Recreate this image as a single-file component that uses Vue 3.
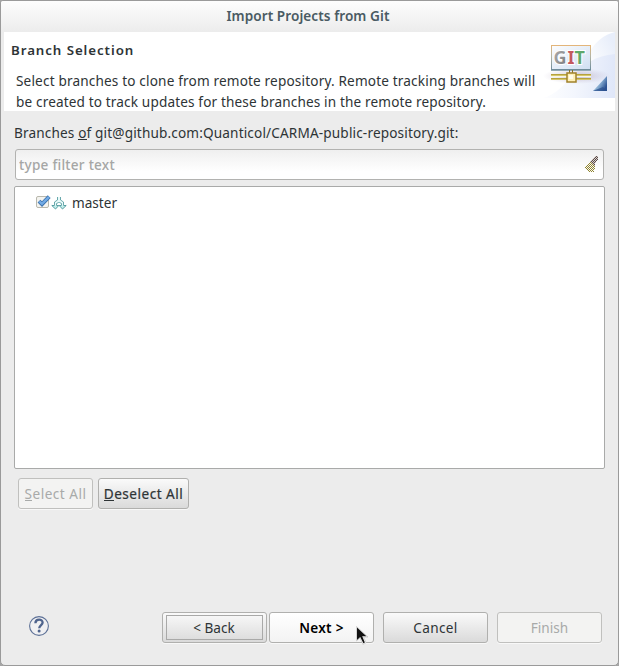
<script setup>
import { ref } from 'vue'

const filter = ref('')
const branches = ref([{ name: 'master', checked: true }])
</script>

<template>
  <main class="window">
    <header class="titlebar"><span class="t-title">Import Projects from Git</span></header>

    <section class="banner">
      <div class="banner-text">
        <h1>Branch Selection</h1>
        <p class="line-a">Select branches to clone from remote repository. Remote tracking branches will</p>
        <p class="line-b">be created to track updates for these branches in the remote repository.</p>
      </div>
      <svg class="banner-art" width="75" height="66" viewBox="0 0 75 66">
        <defs>
          <linearGradient id="sky" gradientUnits="userSpaceOnUse" x1="0" y1="40" x2="80" y2="46">
            <stop offset="0" stop-color="#fff" /><stop offset=".45" stop-color="#f3f6fd" /><stop offset="1" stop-color="#dde5f8" />
          </linearGradient>
          <linearGradient id="swoosh" gradientUnits="userSpaceOnUse" x1="46" y1="30" x2="75" y2="14">
            <stop offset="0" stop-color="#fff" /><stop offset="1" stop-color="#e8eefa" />
          </linearGradient>
          <linearGradient id="panel" x1="0" y1="0" x2="1" y2="1">
            <stop offset="0" stop-color="#fcfdff" /><stop offset="1" stop-color="#cfdff2" />
          </linearGradient>
          <linearGradient id="frame" x1="0" y1="0" x2="0" y2="1">
            <stop offset="0" stop-color="#e3b57a" /><stop offset="0.45" stop-color="#b3b5a5" /><stop offset="1" stop-color="#6f8d9c" />
          </linearGradient>
          <linearGradient id="corner" x1="0" y1="0" x2="1" y2="0.6">
            <stop offset="0.3" stop-color="#b5d5e8" /><stop offset="0.65" stop-color="#7da3cb" /><stop offset="1" stop-color="#2c5292" />
          </linearGradient>
          <linearGradient id="pale" x1="0" y1="0" x2="1" y2="1">
            <stop offset="0" stop-color="#b5b5b5" /><stop offset="1" stop-color="#777" />
          </linearGradient>
          <radialGradient id="shade">
            <stop offset="0" stop-color="#a99bb5" stop-opacity="0.6" /><stop offset="1" stop-color="#b9aec8" stop-opacity="0" />
          </radialGradient>
        </defs>
        <path d="M38 66Q42 8 75 0V66Z" fill="url(#swoosh)" />
        <path d="M3 66C30 59 35 25 75 22V66Z" fill="url(#sky)" />
        <ellipse cx="37" cy="44" rx="34" ry="8" fill="url(#shade)" />
        <rect x="11.5" y="13.5" width="39" height="24" fill="url(#panel)" stroke="url(#frame)" />
        <path d="M11 38.5H51" stroke="#94a9b4" />
        <g class="logo-text">
          <text x="13.5" y="32" fill="url(#pale)">G</text>
          <text x="27.5" y="32" fill="#c4585f">I</text>
          <text x="34.5" y="32" fill="#5fa86b">T</text>
        </g>
        <path d="M11 42.5H51M11 46.5H51" stroke="#b6a23e" />
        <path d="M11 43.5H51M11 47.5H51" stroke="#d5c66c" />
        <path d="M11 44.5H51" stroke="#fbf8df" />
        <path d="M29.5 38V41M32.5 38V41" stroke="#8a7428" />
        <rect x="27" y="41" width="9" height="9" fill="#fff0b8" stroke="#a1822a" stroke-width="1.5" />
        <rect x="29" y="43" width="4" height="4" fill="#fffbe8" />
        <path d="M53 59L67 44V59Z" fill="url(#corner)" />
        <path d="M54 58.5L63 55L67 59H53Z" fill="#2c528f" opacity=".75" />
      </svg>
    </section>

    <section class="content">
      <label class="caption" for="filter">Branches <u>o</u>f git@github.com:Quanticol/CARMA-public-repository.git:</label>
      <div class="search">
        <input id="filter" v-model="filter" placeholder="type filter text" />
        <svg width="16" height="18" viewBox="0 0 16 18" shape-rendering="crispEdges">
          <defs>
            <pattern id="dither" width="2" height="2" patternUnits="userSpaceOnUse">
              <rect width="2" height="2" fill="#fafaf4" />
              <rect width="1" height="1" fill="#8f8230" /><rect x="1" y="1" width="1" height="1" fill="#8f8230" />
            </pattern>
            <pattern id="handle" width="2" height="2" patternUnits="userSpaceOnUse">
              <rect width="2" height="2" fill="#d8d0cb" /><rect width="1" height="1" fill="#5b4c4a" /><rect x="1" y="1" width="1" height="1" fill="#5b4c4a" />
            </pattern>
          </defs>
          <path d="M7 7L12 11L11 17H6L1 13V12Z" fill="url(#dither)" />
          <path d="M7 7L12 1H15V4L12 9V11Z" fill="url(#handle)" />
        </svg>
      </div>

      <ul class="tree">
        <li v-for="b in branches" :key="b.name">
          <svg class="check" width="16" height="14" viewBox="0 0 16 14" @click="b.checked = !b.checked">
            <rect x=".5" y="1.5" width="12" height="11" rx="1.5" fill="#f3f3ef" stroke="#b9b8ad" />
            <path v-if="b.checked" d="M3 6.2L6 9.2L13.2 1.6" fill="none" stroke="#3a70ab" stroke-width="4" />
            <path v-if="b.checked" d="M3.3 6.3L6 8.9L13 1.8" fill="none" stroke="#70a9e4" stroke-width="2.4" />
          </svg>
          <svg class="branch" width="16" height="15" viewBox="0 0 16 15">
            <path d="M6.5 1V4L3.5 6V9.5H.8L4.5 13L7.8 9.5H5.5V7.5L7.5 6.5H8.5L10.5 7.5V9.5H8.2L11.5 13L15.2 9.5H12.5V6L9.5 4V1" fill="#e9faf9" stroke="none" />
            <path d="M6.5 1V4L3.5 6V9.5M9.5 1V4L12.5 6V9.5M5.5 9.5V7.5L7.5 6.5H8.5L10.5 7.5V9.5" fill="none" stroke="#5a9fa4" stroke-width=".9" />
            <path d="M3.5 9.5H.8L4.5 13L7.8 9.5H5.5M12.5 9.5H15.2L11.5 13L8.2 9.5H10.5" fill="#c3efec" stroke="#4b9499" stroke-width=".9" />
          </svg>
          <span>{{ b.name }}</span>
        </li>
      </ul>

      <div class="selection">
        <button class="btn disabled sel" disabled><span><u>S</u>elect All</span></button>
        <button class="btn desel"><span><u>D</u>eselect All</span></button>
      </div>
    </section>

    <footer>
      <svg class="help" width="22" height="22" viewBox="0 0 22 22">
        <circle cx="11" cy="11" r="9.4" fill="#f0f0f2" stroke="#5c7096" stroke-width="1.1" />
        <path d="M7.4 8.2C7.4 3.5 14.8 3.7 14.6 7.6C14.5 10 11.4 10.1 11.2 13.2" fill="none" stroke="#4f648d" stroke-width="2.3" />
        <circle cx="11.1" cy="16" r="1.5" fill="#4f648d" />
      </svg>
      <button class="btn back focus"><span>&lt; Back</span></button>
      <button class="btn next hover"><span>Next &gt;</span></button>
      <button class="btn cancel"><span>Cancel</span></button>
      <button class="btn finish disabled" disabled><span>Finish</span></button>
    </footer>

    <svg class="pointer" width="16" height="22" viewBox="0 0 16 22">
      <path d="M1.5 1.5V16L5 13L7.8 19.3L11.2 17.8L8.5 12H13Z" fill="#fff" stroke="#bbb" stroke-width=".6" />
      <path d="M2 2.5V15L5.2 11.9L8.4 18.3L9.9 17.5L7.2 11.2H11.4Z" fill="#111" />
    </svg>
  </main>
</template>

<style>
body { margin: 0; background: #a5a5a5; }
</style>

<style scoped>
* { box-sizing: border-box; }
.window {
  position: relative; width: 619px; height: 666px; display: flex; flex-direction: column;
  border: 1px solid #9a9a9a; border-radius: 3px 3px 5px 5px; background: #ececec; color: #2e3436;
  font: 13.6px/20px "Noto Sans", "Open Sans", sans-serif; white-space: nowrap; overflow: hidden;
}
.titlebar {
  height: 31px; display: flex; justify-content: center; align-items: center; letter-spacing: .06px;
  background: linear-gradient(#fdfdfd, #ececec); color: #4a5b63; font-weight: 600; padding: 0 3px 2px 0;
}
.banner { height: 79px; margin: 0 3px; background: #fff; display: flex; justify-content: space-between; }
.banner-text { padding: 8px 0 0 7px; }
h1 { margin: 0; font-size: 13.3px; line-height: 20px; font-weight: 600; letter-spacing: .93px; }
p { margin: 0 0 0 5px; line-height: 21px; letter-spacing: .16px; }
.line-a { margin-top: 10px; }
.line-b { letter-spacing: .14px; }
.banner-art { flex: none; margin-left: -40px; }
.logo-text { font: 700 18px "Noto Sans", sans-serif; stroke: #fff; stroke-width: 2px; paint-order: stroke; }
.content { padding: 12px 13px 0; }
.caption { display: block; letter-spacing: .15px; }
u { text-decoration: none; box-shadow: inset 0 -1px currentColor; display: inline-block; height: 17px; line-height: 20px; }
.search {
  display: flex; align-items: center; justify-content: space-between; height: 31px; margin: 6px 1px 0;
  border: 1px solid #b2b2b0; border-radius: 3px; background: linear-gradient(#efefef, #fff 75%); padding: 0 4px 2px 3px;
}
.search input { border: 0; outline: 0; padding: 2px 0 0; background: none; font: inherit; font-weight: 500; letter-spacing: .25px; width: 300px; }
.search input::placeholder { color: #a5a6a5; opacity: 1; }
.tree { margin: 6px 0 0; padding: 6px 0 0 21px; list-style: none; height: 283px; border: 1px solid #a9aaa9; border-radius: 2px; background: #fff; }
.tree li { display: flex; align-items: center; height: 20px; }
.check { margin-top: -3px; }
.branch { margin: 0 5px 0 -1px; }
.selection { display: flex; gap: 5px; padding: 9px 0 0 4px; }
.btn {
  height: 31px; padding: 0; display: flex; align-items: center; justify-content: center;
  border: 1px solid #b0b0ae; border-radius: 3px; background: linear-gradient(#fafafa, #dadada);
  font: inherit; color: inherit; box-shadow: 0 1px #f8f8f8;
}
.disabled { background: #f3f3f2; border-color: #c0c0be; color: #a8aaa9; }
.sel { width: 75px; letter-spacing: .5px; }
.desel { width: 91px; letter-spacing: .5px; -webkit-text-stroke: .2px; }
footer { display: flex; align-items: center; padding: 0 16px 0 27px; margin: auto 0 22px; }
.help { margin-top: -4px; }
.back { margin-left: 112px; }
.back, .next, .cancel, .finish { width: 105px; }
.focus span { display: flex; align-items: center; justify-content: center; width: 97px; height: 25px; border: 1px solid #a9a9a8; padding-right: 1px; }
.hover { margin-left: 2px; background: linear-gradient(#fff, #f3f3f3); color: #000; font-weight: 600; letter-spacing: .3px; }
.cancel { margin-left: 9px; letter-spacing: .35px; }
.finish { margin-left: 9px; }
.pointer { position: absolute; left: 354px; top: 624px; }
</style>
